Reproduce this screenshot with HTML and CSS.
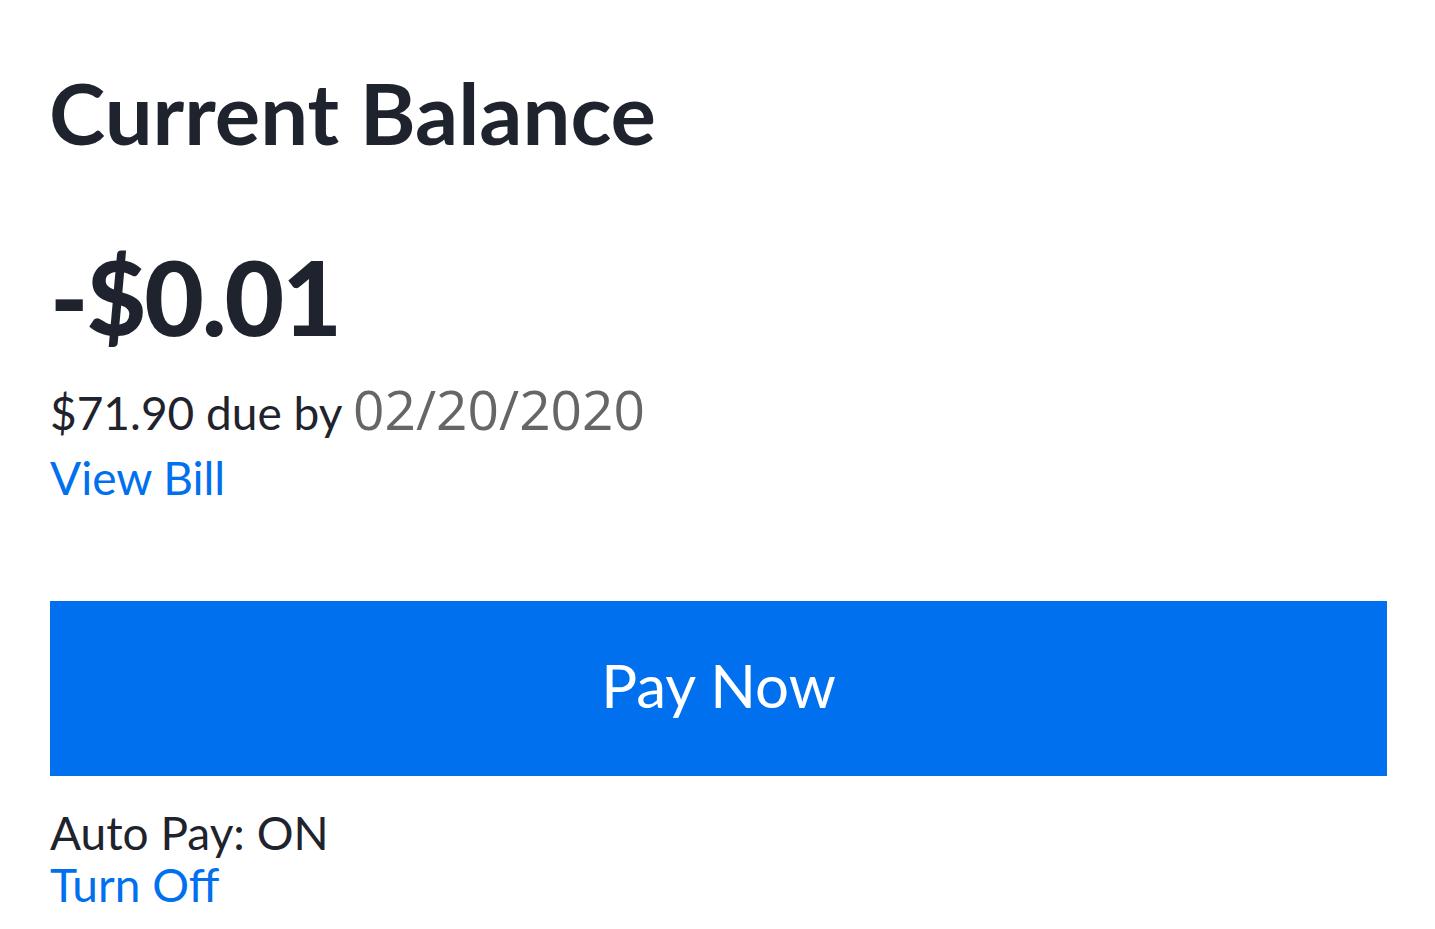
FILE: index.html
```html
<!DOCTYPE html>
<html>
<head>
<meta charset="utf-8">
<link rel="stylesheet" href="styles.css">
</head>
<body>
<main class="card">
  <h1 class="title">Current Balance</h1>
  <div class="amount">-$0.01</div>
  <div class="due">$71.90 due by <span class="date">02/20/2020</span></div>
  <a class="link view" href="#">View Bill</a>
  <button class="pay">Pay Now</button>
  <div class="auto">Auto Pay: ON</div>
  <a class="link off" href="#">Turn Off</a>
</main>
</body>
</html>
```
FILE: styles.css
```css
html, body { margin: 0; padding: 0; background: #fff; }
body { font-family: "Lato", "Noto Sans", sans-serif; color: #1f232d; }
.card { display: flex; flex-direction: column; align-items: flex-start; padding: 0 48px 0 50px; }
.title { margin: 67px 0 0 -1px; font-size: 85px; font-weight: 700; line-height: 90px; }
.amount { margin-top: 84px; font-size: 103px; font-weight: 900; line-height: 110px; letter-spacing: -2px; }
.due { margin-top: 28px; font-size: 46px; line-height: 60px; }
.date { color: #666; font-family: "Open Sans", sans-serif; font-size: 55px; }
.link { color: #0070ef; text-decoration: none; font-size: 46px; line-height: 56px; }
.view { margin-top: 7px; }
.pay { align-self: stretch; margin-top: 95px; height: 175px; padding: 0 0 8px; border: 0; background: #0070ef; color: #fff; font-family: inherit; font-size: 60px; }
.auto { margin-top: 32px; font-size: 46px; line-height: 49px; }
```
